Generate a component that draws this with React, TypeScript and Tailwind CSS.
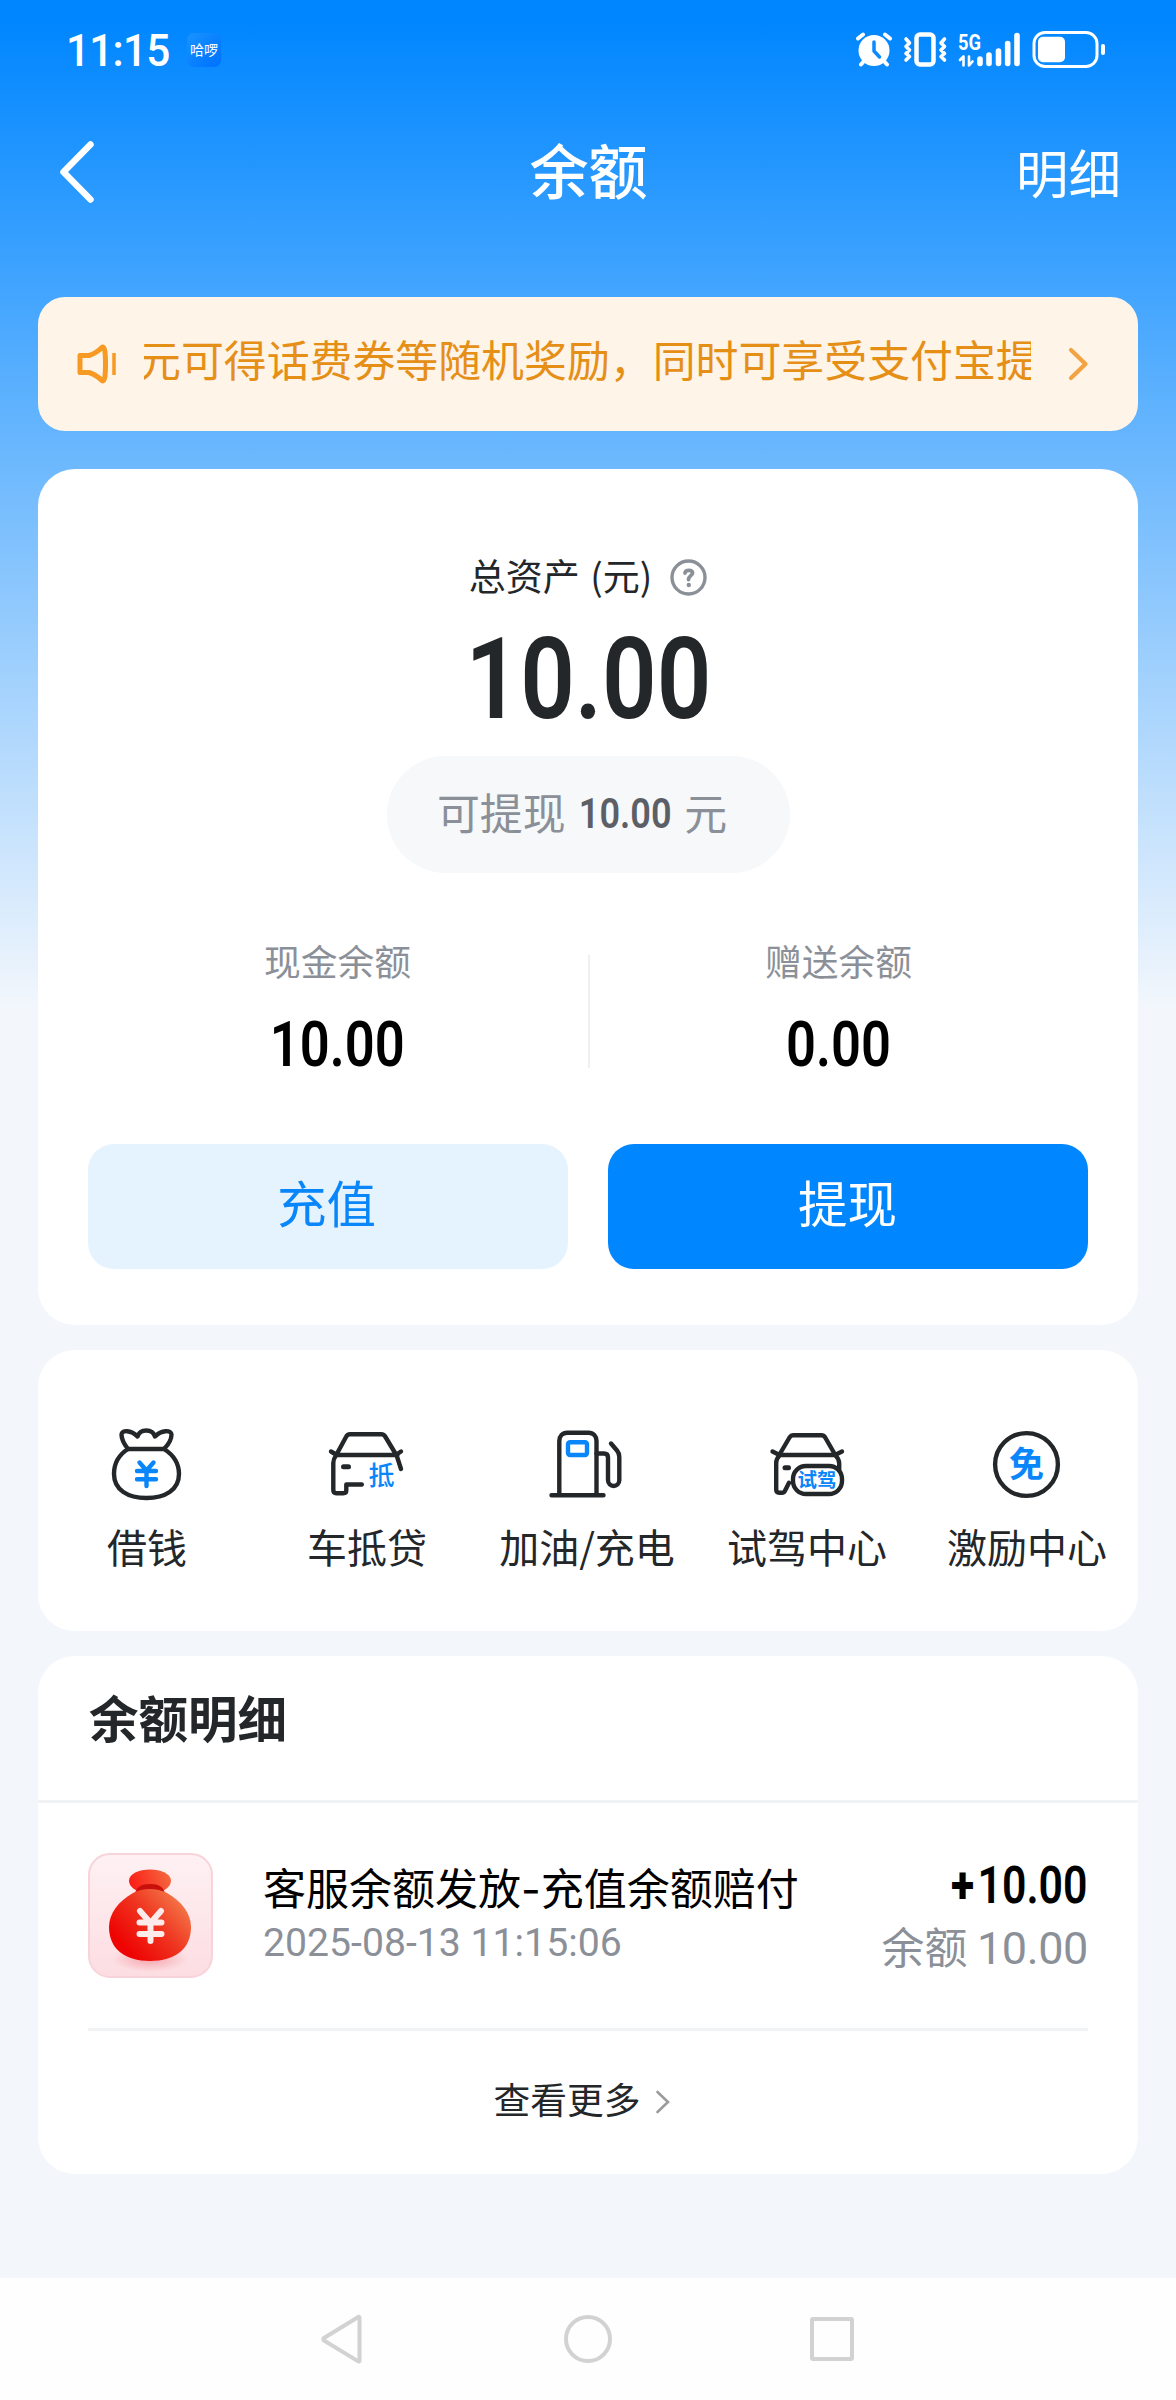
import type { ReactNode } from 'react'

const shortcuts: { label: string; icon: ReactNode }[] = [
  { label: '借钱', icon: <LoanIcon /> },
  { label: '车抵贷', icon: <CarLoanIcon /> },
  { label: '加油/充电', icon: <FuelIcon /> },
  { label: '试驾中心', icon: <TestDriveIcon /> },
  { label: '激励中心', icon: <RewardIcon /> },
]

const records = [
  { id: 1, title: '客服余额发放-充值余额赔付', time: '2025-08-13 11:15:06', amount: '10.00', balance: '10.00' },
]

function LineIcon({ children }: { children: ReactNode }) {
  return (
    <svg
      className="w-20 h-20"
      viewBox="0 0 80 80"
      fill="none"
      stroke="#24272a"
      strokeWidth="4.4"
      strokeLinecap="round"
      strokeLinejoin="round"
    >
      {children}
    </svg>
  )
}

function LoanIcon() {
  return (
    <LineIcon>
      <path d="M21 25C11.500 31 7 40 7 50c0 16 14 24 32.500 24S72 66 72 50c0-10-5.500-19-15-25H21z" />
      <path d="M21 25c-4-5-6.500-10.500-6.500-14.500C14.500 6 24 5.500 30.500 12.500 33 4.500 45.500 4.500 48 12.500 54.500 5.500 64.500 6 64.500 10.500c0 4-3 10-7.500 14.500" />
      <path stroke="#0a86fb" d="M32.500 38.500l7 8 7-8M30 47h19M30 55.200h19M39.500 47v15" />
    </LineIcon>
  )
}

function CarLoanIcon() {
  return (
    <LineIcon>
      <path d="M9.500 30.500l9.500-17.500c1-2 2.500-2.700 4-2.700h31c2 0 3.500.7 4.500 2.700l10.500 17.500M9.500 31h61M4 27.500l5 3M74 27.500l-4.500 3M69.500 31L74 45" />
      <path d="M9 31.500C7 34 6.300 36 6.300 39v27c0 2 1 3.200 3 3.200h7c2 0 3-1 3-3V60.500h15.500" />
      <path strokeWidth="5" d="M16.500 42.700h5" />
      <text x="54.500" y="60.500" textAnchor="middle" fontSize="26" fontWeight="500" fill="#0a86fb" stroke="none">抵</text>
    </LineIcon>
  )
}

function FuelIcon() {
  return (
    <LineIcon>
      <path d="M12.300 71V17c0-5 3.200-8.300 8-8.300h21.200c4.800 0 8 3.300 8 8.300v54M4.500 71.300h52" />
      <rect x="21" y="18.300" width="19" height="12.700" rx="2" stroke="#0a86fb" />
      <path d="M49.500 29.500h7.500c2.500 0 4 1.500 4 4V56c0 8 11.300 8 11.300 0V33c0-3-.6-4.500-2.300-6.500l-6-7" />
    </LineIcon>
  )
}

function TestDriveIcon() {
  return (
    <LineIcon>
      <path d="M12.500 30.500l10-17C23.500 12 24.500 11.300 26 11.300h28.500c1.500 0 2.700.7 3.700 2.200l9.800 17M12.500 31h56M5.500 27.500l6 3M75 27.500l-6 3" />
      <path d="M12.500 31.500C10 34 9.200 36 9.200 39v26.500c0 2 1 3.200 3 3.200H15c1.500 0 2.500-.7 3-2l4-8M68.500 31.500c2.700 2.500 3.700 5 3.700 8V46" />
      <path strokeWidth="5" d="M18 43.700h3.500" />
      <rect x="26" y="42" width="49" height="28" rx="13" fill="#fff" />
      <text x="50" y="63" textAnchor="middle" fontSize="19.500" fontWeight="700" fill="#0a86fb" stroke="none">试驾</text>
    </LineIcon>
  )
}

function RewardIcon() {
  return (
    <LineIcon>
      <circle cx="39.500" cy="40.500" r="31.400" />
      <text x="39.500" y="53" textAnchor="middle" fontSize="35" fontWeight="700" fill="#0a86fb" stroke="none">免</text>
    </LineIcon>
  )
}

function MoneyBag() {
  return (
    <svg className="w-full h-full" viewBox="2 2 121 121">
      <defs>
        <linearGradient id="bag" x1="0.2" y1="0.8" x2="0.95" y2="0.2">
          <stop offset="0" stopColor="#ee0503" />
          <stop offset="0.5" stopColor="#ef3420" />
          <stop offset="1" stopColor="#f47a4a" />
        </linearGradient>
        <linearGradient id="knot" x1="0" y1="0.6" x2="1" y2="0.4">
          <stop offset="0" stopColor="#fb1c16" />
          <stop offset="1" stopColor="#f4683f" />
        </linearGradient>
        <radialGradient id="glow">
          <stop offset="0" stopColor="#f5a5ac" />
          <stop offset="1" stopColor="#f5a5ac" stopOpacity="0" />
        </radialGradient>
      </defs>
      <ellipse cx="62" cy="106" rx="38" ry="13" fill="url(#glow)" />
      <path d="M49 38C44 35 41 32 41 27.500 41 21 51 16.500 62 16.500s21 4.500 21 11C83 32 80 35 75 38z" fill="url(#knot)" />
      <path d="M47 40c2-6 6-9 15-9s13 3 15 9z" fill="#c90f0c" />
      <path d="M62 36c6 0 12 1.500 17 4 14 8 24 20 24 34 0 22-16 34-41 34S21 96 21 74c0-14 10-26 24-34 5-2.500 11-4 17-4z" fill="url(#bag)" />
      <path d="M52 58l10.500 12L73 58M51.500 69.500h22M51.500 81h22M62.500 70v18" fill="none" stroke="#fdeaea" strokeWidth="6" strokeLinecap="round" strokeLinejoin="round" />
    </svg>
  )
}

function StatusBar() {
  return (
    <div className="flex items-center h-[100px] pl-[66px] pr-[70px] text-white">
      <span className="w-[106px] whitespace-nowrap font-['Roboto',sans-serif] font-medium text-[45px] leading-none tracking-[-0.8px] scale-x-[0.94] origin-left">11:15</span>
      <span className="ml-[15px] flex items-center justify-center w-[34px] h-[34px] pb-[2px] rounded-[7px] bg-linear-to-br from-[#1a93ff] to-[#0070ff] text-[14px] leading-none">
        哈啰
      </span>
      <svg className="ml-auto w-[250px] h-10" viewBox="856 30 250 40" fill="none" stroke="#fff" strokeLinecap="round" strokeLinejoin="round">
        {/* alarm */}
        <circle cx="874" cy="50.500" r="15.500" fill="#fff" stroke="none" />
        <path strokeWidth="4" d="M858 38.500l5-4M890 38.500l-5-4M864.500 60.500l-3.500 4M883.500 60.500l3.500 4" />
        <path stroke="#0c8bff" strokeWidth="3.500" d="M874 42v9l5.500 6" />
        {/* vibrate */}
        <rect x="916.500" y="34.500" width="17" height="30" rx="3.500" strokeWidth="4.500" />
        <path strokeWidth="3.600" d="M906 39l3.500 4-3.500 3.500 3.500 3.500-3.500 3.500 3.500 3-3.500 3.500M944.500 39l-3.500 4 3.500 3.500-3.500 3.500 3.500 3.500-3.500 3 3.500 3.500" />
        {/* signal */}
        <text x="958" y="49.500" fontSize="22" fontWeight="700" fill="#fff" stroke="none" textLength="23" lengthAdjust="spacingAndGlyphs" className="font-['Roboto',sans-serif]">5G</text>
        <path strokeWidth="2.600" d="M960 60l3.500-3.500V65.500M969 56.500v9l3.500-4" />
        <path strokeWidth="5.600" d="M980 59v4.500M989 55v8.500M998.500 51v12.500M1007.700 43.500v20M1017 35.500v28" />
        {/* battery */}
        <rect x="1034" y="32.500" width="63" height="34" rx="11" strokeWidth="3" />
        <rect x="1038" y="36.700" width="27" height="25.600" rx="5" fill="#fff" stroke="none" />
        <path strokeWidth="4" d="M1103 46v7" />
      </svg>
    </div>
  )
}

function Amount({ label, value }: { label: string; value: string }) {
  return (
    <div className="flex-1 flex flex-col items-center">
      <span className="text-[36.750px] leading-[44px] text-[#8b9098]">{label}</span>
      <span className="mt-[31px] font-['Roboto',sans-serif] font-semibold text-[62.500px] leading-[64px] text-black scale-x-[0.84]">
        {value}
      </span>
    </div>
  )
}

export default function App() {
  return (
    <div className="w-[1176px] h-[2400px] flex flex-col overflow-hidden bg-[#f3f7fc] bg-[linear-gradient(180deg,#0086ff_20px,#f3f7fc_1010px)] font-['Noto_Sans_CJK_SC',sans-serif] text-[#24272a]">
      <StatusBar />

      <header className="grid grid-cols-3 items-center h-[144px] pl-[56px] pr-[55px] text-white">
        <svg className="w-10 h-16" viewBox="-2 0 40 64" fill="none" stroke="currentColor" strokeWidth="6.500" strokeLinecap="round" strokeLinejoin="round">
          <path d="M32.500 4.500L5.500 32l27 27.500" />
        </svg>
        <h1 className="pb-[6px] text-center text-[59px] leading-[70px] font-medium">余额</h1>
        <span className="pb-[2px] text-right text-[52.500px] leading-[60px]">明细</span>
      </header>

      <main className="flex flex-col px-[38px]">
        <div className="mt-[53px] flex items-center h-[134px] rounded-[27px] bg-[#fef4e8] text-[#e58f17]">
          <svg className="ml-[38px] w-[42px] h-[46px] shrink-0" viewBox="0 0 42 46" fill="none" stroke="#f79a24" strokeWidth="5" strokeLinejoin="round">
            <path d="M4 14.500h9c5-1.500 9.500-4.500 13.500-8.500 2 0 3 4 3 17s-1 17-3 17c-4-4-8.500-7-13.500-8.500H4z" />
            <path strokeWidth="3.500" d="M38 12v22" />
          </svg>
          <div className="ml-[26px] w-[887px] overflow-hidden whitespace-nowrap pb-[13px]">
            <span className="-ml-[6px] text-[42.900px] leading-[52px]">元可得话费券等随机奖励，同时可享受支付宝提</span>
          </div>
          <svg className="ml-[36px] w-[22px] h-[38px]" viewBox="0 0 22 38" fill="none" stroke="#f3a341" strokeWidth="4.200" strokeLinecap="round" strokeLinejoin="round">
            <path d="M4 5l14.500 14L4 33" />
          </svg>
        </div>

        <section className="mt-[38px] h-[856px] px-[50px] flex flex-col items-center rounded-[37px] bg-white">
          <div className="mt-[84px] flex items-center h-[44px] text-[37px] leading-[44px] [word-spacing:2px]">
            总资产 (元)
            <svg className="ml-[18px] mt-[5px] w-[37px] h-[37px]" viewBox="0 0 37 37" fill="none" stroke="#8b9098" strokeWidth="3.800" strokeLinecap="round">
              <circle cx="18.500" cy="18.500" r="16.500" strokeWidth="3.400" />
              <path d="M15 14c.5-3.500 7.500-3.500 7.500 0 0 2.500-4 3-4 6.500" />
              <circle cx="18.800" cy="26" r="2.200" fill="#8b9098" stroke="none" />
            </svg>
          </div>
          <div className="mt-6 font-['Roboto',sans-serif] font-semibold text-[114px] leading-[116px] scale-x-[0.84]">10.00</div>
          <div className="mt-[19px] flex items-center justify-center w-[403px] h-[117px] pr-3 pb-[6px] rounded-full bg-[#f6f8fa] text-[42.900px] text-[#8b9098]">
            可提现
            <span className="mx-[4px] mt-[4px] font-['Roboto',sans-serif] font-semibold text-[43px] text-[#5c5f66] scale-x-[0.84]">10.00</span>
            元
          </div>

          <div className="mt-[65px] flex w-full h-[139px]">
            <Amount label="现金余额" value="10.00" />
            <div className="mt-[17px] -mr-px ml-px w-[2px] h-[113px] bg-[#eff0f2]" />
            <Amount label="赠送余额" value="0.00" />
          </div>

          <div className="mt-[67px] grid grid-cols-2 gap-10 w-full">
            <button className="h-[125px] pb-[9px] pr-[3px] rounded-[26px] bg-[#e5f3ff] text-[49.500px] text-[#0a86fb]">充值</button>
            <button className="h-[125px] pb-[9px] pr-px rounded-[26px] bg-[#0086ff] text-[49.500px] text-white">提现</button>
          </div>
        </section>

        <section className="mt-[25px] h-[281px] pt-[74px] rounded-[37px] bg-white">
          <div className="-ml-px w-[1100px] grid grid-cols-5">
            {shortcuts.map((s) => (
              <div key={s.label} className="flex flex-col items-center">
                {s.icon}
                <span className="mt-[18px] text-[40px] leading-[48px] whitespace-nowrap">{s.label}</span>
              </div>
            ))}
          </div>
        </section>

        <section className="mt-[25px] h-[518px] rounded-[37px] bg-white">
          <div className="h-[147px] pt-[31px] pl-[51px] border-b-3 border-[#f1f2f3]">
            <h2 className="text-[49.500px] leading-[60px] font-bold">余额明细</h2>
          </div>
          {records.map((r) => (
            <div key={r.id} className="mx-[50px] h-[228px] pt-[50px] flex border-b-3 border-[#f1f2f3]">
              <div className="w-[125px] h-[125px] rounded-[22px] border-2 border-[#f8d3d9] bg-linear-to-b from-[#fef1f3] to-[#fcdde2]">
                <MoneyBag />
              </div>
              <div className="ml-[50px] mt-[10px] flex flex-col">
                <span className="font-['Inter','Noto_Sans_CJK_SC',sans-serif] text-[43px] leading-[52px] text-black">{r.title}</span>
                <span className="mt-[6px] font-['Roboto',sans-serif] text-[39.200px] leading-[44px] text-[#8b9098]">{r.time}</span>
              </div>
              <div className="ml-auto mt-[7px] flex flex-col items-end">
                <span className="font-['Roboto',sans-serif] font-semibold text-[51px] leading-[52px] text-black scale-x-[0.84] origin-right">
                  <span className="mr-1 font-extrabold">+</span>
                  {r.amount}
                </span>
                <span className="mt-[8px] text-[42.900px] leading-[50px] text-[#8b9098]">
                  余额 <span className="font-['Roboto',sans-serif] text-[45px] tracking-[-0.4px]">{r.balance}</span>
                </span>
              </div>
            </div>
          ))}
          <div className="flex items-center justify-center h-[136px] pr-[12px] text-[36.750px]">
            查看更多
            <svg className="ml-[14px] mt-[6px] w-4 h-6" viewBox="0 0 16 24" fill="none" stroke="#9b9b9b" strokeWidth="2.600" strokeLinecap="round">
              <path d="M2.500 2l10.500 10L2.500 22" />
            </svg>
          </div>
        </section>
      </main>

      <nav className="mt-auto h-[122px] flex items-center justify-center bg-[#fefefe]">
        <svg className="w-[560px] h-[60px]" viewBox="308 2309 560 60" fill="none" stroke="#d2d2d2" strokeWidth="4" strokeLinejoin="round">
          <path d="M359.500 2317.500v43.500c0 .5-.7.700-1.200.4L324 2340.500c-1-.7-1-1.800 0-2.500l34.300-21c.5-.3 1.200 0 1.200.5z" />
          <circle cx="588" cy="2339" r="22" />
          <rect x="812" y="2319" width="40" height="40" rx="1" />
        </svg>
      </nav>
    </div>
  )
}
